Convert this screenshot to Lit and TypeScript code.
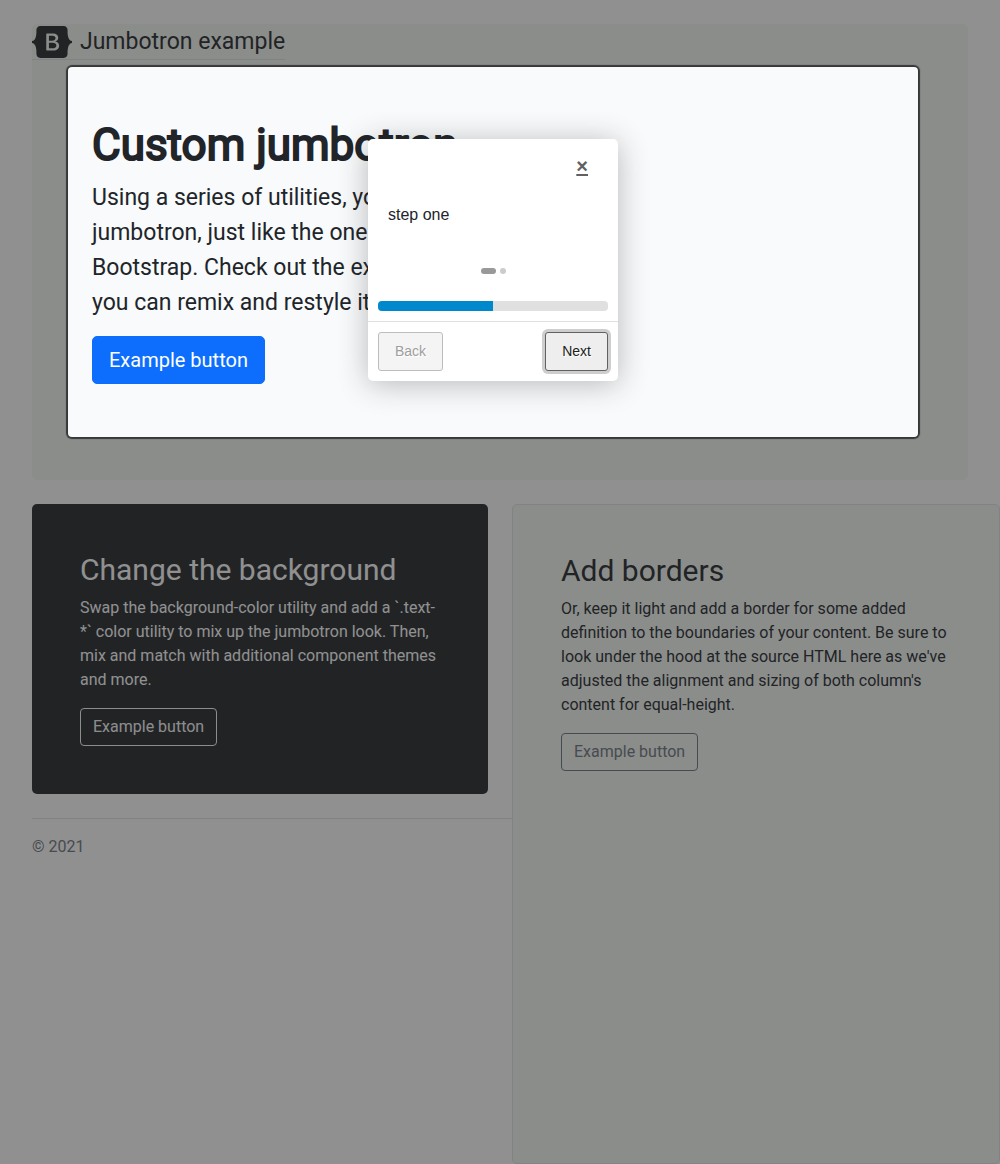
import { LitElement, html, css, svg } from "lit";
import { customElement, property, state } from "lit/decorators.js";
import { classMap } from "lit/directives/class-map.js";

const brandMark = svg`<path fill="currentColor" fill-rule="evenodd" clip-rule="evenodd" d="M24.509 0c-6.733 0-11.715 5.893-11.492 12.284.214 6.14-.064 14.092-2.066 20.577C8.943 39.365 5.547 43.485 0 44.014v5.972c5.547.529 8.943 4.649 10.951 11.153 2.002 6.485 2.28 14.437 2.066 20.577C12.794 88.106 17.776 94 24.51 94H93.5c6.733 0 11.714-5.893 11.491-12.284-.214-6.14.064-14.092 2.066-20.577 2.009-6.504 5.396-10.624 10.943-11.153v-5.972c-5.547-.529-8.934-4.649-10.943-11.153-2.002-6.484-2.28-14.437-2.066-20.577C105.214 5.894 100.233 0 93.5 0H24.508zM80 57.863C80 66.663 73.436 72 62.543 72H44a2 2 0 01-2-2V24a2 2 0 012-2h18.437c9.083 0 15.044 4.92 15.044 12.474 0 5.302-4.01 10.049-9.119 10.88v.277C75.317 46.394 80 51.21 80 57.863zM60.521 28.34H49.948v14.934h8.905c6.884 0 10.68-2.772 10.68-7.727 0-4.643-3.264-7.207-9.012-7.207zM49.948 49.2v16.458H60.91c7.167 0 10.964-2.876 10.964-8.281 0-5.406-3.903-8.178-11.425-8.178H49.948z"/>`;

/** Popover that walks the visitor through the steps of the tour. */
@customElement("tour-popover")
export class TourPopover extends LitElement {
  @property({ attribute: false }) steps: string[] = [];
  @state() private index = 0;

  static styles = css`
    :host {
      display: block;
      box-sizing: border-box;
      width: 250px;
      background: #fff;
      color: #212529;
      border-radius: 5px;
      box-shadow: 0 3px 30px rgba(33, 33, 33, 0.3);
      font: 16px/24px "Liberation Sans", Arial, sans-serif;
    }
    .head {
      display: flex;
      justify-content: flex-end;
      padding: 12px 30px 2px;
    }
    .close {
      border: 0;
      padding: 0;
      background: none;
      color: #616161;
      font: bold 20px/30px "Liberation Sans", Arial, sans-serif;
      text-decoration: underline;
      cursor: pointer;
    }
    .text {
      padding: 20px;
    }
    .bullets {
      display: flex;
      justify-content: center;
      gap: 4px;
      padding: 21px 0 27px;
    }
    .bullet {
      width: 6px;
      height: 6px;
      padding: 0;
      border: 0;
      border-radius: 10px;
      background: #ccc;
      cursor: pointer;
    }
    .bullet.active {
      width: 15px;
      background: #999;
    }
    .track {
      height: 10px;
      margin: 0 10px 10px;
      border-radius: 4px;
      background: #e0e0e0;
      overflow: hidden;
    }
    .bar {
      height: 100%;
      background: #08c;
    }
    .actions {
      display: flex;
      justify-content: space-between;
      padding: 10px;
      border-top: 1px solid #e0e0e0;
    }
    .step {
      padding: 8px 16px;
      border: 1px solid #bdbdbd;
      border-radius: 3px;
      background: #f4f4f4;
      color: #424242;
      font: 14px/21px "Liberation Sans", Arial, sans-serif;
      text-shadow: 1px 1px 0 #fff;
      cursor: pointer;
    }
    .step:disabled {
      color: #9e9e9e;
      cursor: default;
    }
    .step.next {
      border-color: #616161;
      background: #eee;
      color: #212121;
      box-shadow: 0 0 0 3px rgba(158, 158, 158, 0.5);
    }
  `;

  private go(to: number) {
    this.index = Math.max(0, Math.min(this.steps.length - 1, to));
  }

  render() {
    const done = ((this.index + 1) / this.steps.length) * 100;
    return html`
      <div class="head">
        <button class="close" aria-label="Close" @click=${() => this.remove()}>×</button>
      </div>
      <div class="text">${this.steps[this.index]}</div>
      <div class="bullets">
        ${this.steps.map(
          (_, i) => html`<button
            class=${classMap({ bullet: true, active: i === this.index })}
            aria-label=${`Step ${i + 1}`}
            @click=${() => this.go(i)}
          ></button>`
        )}
      </div>
      <div class="track" role="progressbar" aria-label="Progress" aria-valuemin="0" aria-valuemax="100" aria-valuenow=${done}>
        <div class="bar" style=${`width:${done}%`}></div>
      </div>
      <div class="actions">
        <button class="step" ?disabled=${this.index === 0} @click=${() => this.go(this.index - 1)}>Back</button>
        <button class="step next" @click=${() => this.go(this.index + 1)}>Next</button>
      </div>
    `;
  }
}

@customElement("app-root")
export class AppRoot extends LitElement {
  private steps = ["step one", "step two"];

  static styles = css`
    :host {
      display: flex;
      flex-direction: column;
      gap: 24px;
      box-sizing: border-box;
      min-height: 100vh;
      padding-top: 24px;
      overflow: hidden;
      background: #fff;
      color: #212529;
      font: 16px/24px Roboto, "Liberation Sans", sans-serif;
    }
    h1,
    h2,
    p {
      margin: 0;
      font-weight: 400;
    }
    .hero {
      margin: 0 32px;
      padding-bottom: 43px;
      border-radius: 5px;
      background: #f4f8f5;
    }
    .top {
      display: flex;
    }
    .brand {
      display: flex;
      align-items: center;
      gap: 8px;
      border-bottom: 1px solid #dee2e6;
      color: inherit;
      font-size: 23px;
      line-height: 35px;
      text-decoration: none;
    }
    .mark {
      width: 40px;
      height: 32px;
    }
    /* The wide outer shadow dims everything around the highlighted panel. */
    .spotlight {
      position: relative;
      z-index: 1;
      margin: 7px 50px 0 36px;
      padding: 52px 24px 53px;
      border-radius: 4px;
      background: #f8fafc;
      box-shadow:
        0 0 1px 2px rgba(33, 33, 33, 0.8),
        0 0 0 5000px rgba(33, 33, 33, 0.5);
    }
    /* A stroke thickens the regular cut, keeping its narrower letter widths. */
    .title {
      margin-bottom: 8px;
      font-size: 44px;
      line-height: 53px;
      -webkit-text-stroke: 2px currentColor;
    }
    .lead {
      max-width: 544px;
      margin-bottom: 16px;
      font-size: 23px;
      line-height: 35px;
    }
    .popover {
      position: absolute;
      top: 72px;
      left: calc(50% - 125px);
    }
    .btn {
      padding: 6px 12px;
      border: 1px solid currentColor;
      border-radius: 4px;
      background: none;
      color: inherit;
      font: inherit;
      cursor: pointer;
    }
    .btn.primary {
      padding: 8px 16px;
      border-color: #0d6efd;
      border-radius: 5px;
      background: #0d6efd;
      color: #fff;
      font-size: 20px;
      line-height: 30px;
    }
    .btn.light {
      color: #f8f9fa;
    }
    .btn.secondary {
      color: #6c757d;
    }
    .columns {
      display: grid;
      flex: 1;
      grid-template-columns: calc(50% + 12px) 1fr;
    }
    .left {
      padding-left: 32px;
    }
    .card {
      box-sizing: border-box;
      padding: 48px;
      border-radius: 5px;
    }
    .card h2 {
      margin-bottom: 8px;
      font-size: 30px;
      line-height: 36px;
    }
    .card p {
      margin-bottom: 16px;
    }
    .card.dark {
      margin-right: 24px;
      background: #212529;
      color: #fff;
    }
    .card.outlined {
      border: 1px solid #dee2e6;
      background: #f4f8f5;
    }
    .foot {
      margin-top: 24px;
      padding-top: 16px;
      border-top: 1px solid #dee2e6;
      color: #6c757d;
    }
  `;

  render() {
    return html`
      <section class="hero">
        <header class="top">
          <a class="brand" href="#">
            <svg class="mark" viewBox="0 0 118 94" role="img" aria-label="Bootstrap">${brandMark}</svg>
            <span>Jumbotron example</span>
          </a>
        </header>
        <div class="spotlight">
          <h1 class="title">Custom jumbotron</h1>
          <p class="lead">
            Using a series of utilities, you can create this jumbotron, just like the one in previous versions of
            Bootstrap. Check out the examples below for how you can remix and restyle it to your liking.
          </p>
          <button class="btn primary">Example button</button>
          <tour-popover class="popover" .steps=${this.steps}></tour-popover>
        </div>
      </section>
      <div class="columns">
        <div class="left">
          <section class="card dark">
            <h2>Change the background</h2>
            <p>
              Swap the background-color utility and add a \`.text-*\` color utility to mix up the jumbotron look. Then,
              mix and match with additional component themes and more.
            </p>
            <button class="btn light">Example button</button>
          </section>
          <footer class="foot">© 2021</footer>
        </div>
        <section class="card outlined">
          <h2>Add borders</h2>
          <p>
            Or, keep it light and add a border for some added definition to the boundaries of your content. Be sure to
            look under the hood at the source HTML here as we've adjusted the alignment and sizing of both column's
            content for equal-height.
          </p>
          <button class="btn secondary">Example button</button>
        </section>
      </div>
    `;
  }
}
